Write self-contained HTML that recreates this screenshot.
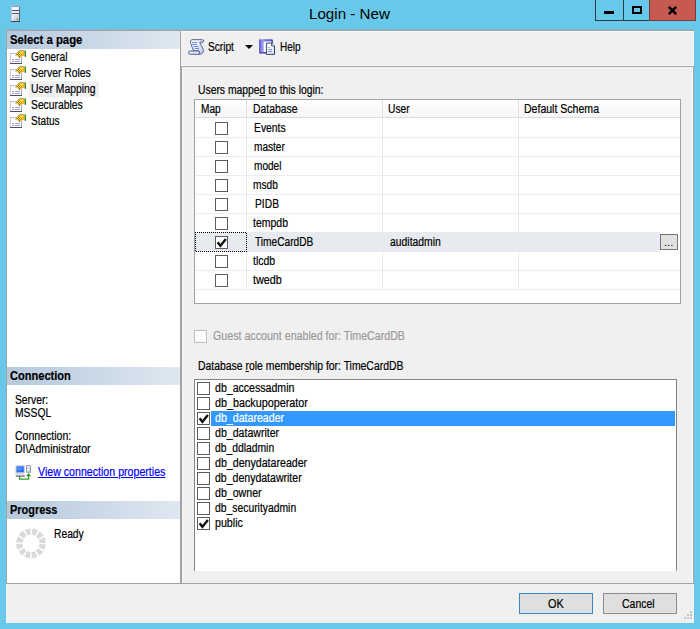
<!DOCTYPE html>
<html><head><meta charset="utf-8"><title>Login - New</title>
<style>
*{box-sizing:border-box;margin:0;padding:0}
html,body{width:700px;height:629px;overflow:hidden}
body{background:#68c8ea;font-family:"Liberation Sans",sans-serif;font-size:11px;color:#000;position:relative}
.a{position:absolute}
.t{position:absolute;white-space:nowrap;transform-origin:0 0;-webkit-text-stroke:0.2px}
.hdr{position:absolute;left:7px;width:173px;height:18px;background:linear-gradient(90deg,#b7c9dd 0%,#c6d5e5 40%,#dfe8f1 100%)}
.cb{position:absolute;width:13px;height:13px;border:1px solid #5c5c5c;background:#fff}
.ck{position:absolute}
.hl{position:absolute;left:195px;width:485px;height:1px;background:#ededed}
.vl{position:absolute;top:100px;width:1px;height:190px;background:#e9e9e9}
.btn{position:absolute;top:593px;height:21px;width:74px;border:1px solid #8c8c8c;background:#dfdfdf}
</style></head><body>

<svg class="a" style="left:11px;top:6px" width="9" height="16" viewBox="0 0 9 16"><defs><linearGradient id="sv" x1="0" y1="0" x2="1" y2="1"><stop offset="0" stop-color="#f4f4ff"/><stop offset="1" stop-color="#b9bce8"/></linearGradient></defs><rect x="0" y="0" width="9" height="16" fill="#f3f4fc"/><rect x="0" y="0" width="9" height="1" fill="#9a9eb4"/><rect x="0" y="0" width="1" height="16" fill="#c9cbdc"/><rect x="8" y="1" width="1" height="15" fill="#5c6078"/><rect x="0" y="15" width="9" height="1" fill="#3e3e50"/><rect x="1" y="4" width="7" height="1" fill="#4e586c"/><rect x="1" y="7" width="7" height="1" fill="#4e586c"/><rect x="1" y="5" width="7" height="1" fill="#dfe2f4"/><rect x="2" y="8" width="6" height="7" fill="url(#sv)"/><circle cx="6.3" cy="13.2" r="0.9" fill="#7ac010"/></svg>
<div class="a" style="left:595px;top:0;width:29px;height:21px;border:1px solid #2a3f4a;border-top:none"></div>
<div class="a" style="left:623px;top:0;width:27px;height:21px;border:1px solid #2a3f4a;border-top:none"></div>
<div class="a" style="left:649px;top:0;width:47px;height:21px;background:#c75a50;border:1px solid #7d3a35;border-top:none"></div>
<div class="a" style="left:604px;top:11px;width:10px;height:3px;background:#000"></div>
<div class="a" style="left:632px;top:6px;width:10px;height:8px;border:2px solid #000"></div>
<svg class="a" style="left:667px;top:6px" width="11" height="9" viewBox="0 0 11 9"><path d="M1.8 0.8 L9.2 8.2 M9.2 0.8 L1.8 8.2" stroke="#000" stroke-width="2.4"/></svg>
<div class="a" style="left:6px;top:30px;width:688px;height:593px;background:#f0f0f0"></div>
<div class="a" style="left:6px;top:29px;width:688px;height:1px;background:#80b9cf"></div>
<div class="a" style="left:6px;top:30px;width:688px;height:1px;background:#a3a3a3"></div>
<div class="a" style="left:181px;top:31px;width:513px;height:1px;background:#fbfbfb"></div>
<div class="a" style="left:6px;top:31px;width:175px;height:553px;background:#fff;border-left:1px solid #a3a3a3;border-right:1px solid #a3a3a3"></div>
<div class="hdr" style="top:31px"></div><div class="hdr" style="top:367px"></div><div class="hdr" style="top:501px"></div>
<div class="a" style="left:29px;top:81px;width:70px;height:16px;background:#f0f0f0"></div>
<svg class="a" style="left:10px;top:50px" width="16" height="16" viewBox="0 0 16 16"><rect x="0" y="3" width="12" height="11" fill="#fff"/><rect x="0" y="3" width="8" height="1" fill="#b9bbee"/><rect x="0" y="4" width="1" height="9" fill="#cfd0de"/><rect x="11" y="7" width="1" height="6" fill="#a2a4b2"/><rect x="0" y="13" width="12" height="1" fill="#505058"/><rect x="2" y="9" width="2" height="1" fill="#8f92dc"/><rect x="5" y="9" width="5" height="1" fill="#9a9de0"/><rect x="2" y="11" width="2" height="1" fill="#8f92dc"/><rect x="5" y="11" width="5" height="1" fill="#9a9de0"/><path d="M4.8 5.8 L7.2 2.6 L9.5 1 L12.5 0.3 L14.8 1 L14.8 5.2 L12.5 6.2 L10.6 6.4 L9.4 8 L8.2 7.2 L7 5.6 Z" fill="#e8a624"/><ellipse cx="12" cy="3.2" rx="2.9" ry="2.4" fill="#f7b32a"/><ellipse cx="11.6" cy="2.4" rx="1.9" ry="1.1" fill="#ffd84e"/><path d="M6.4 3.8 L8.3 2.2 L10 4 L10.4 6.2 L9.3 7.9 L8.2 7.1 Z" fill="#8a7430"/><g fill="#f4e04a"><rect x="7" y="3" width="1" height="1"/><rect x="9" y="3" width="1" height="1"/><rect x="8" y="4" width="1" height="1"/><rect x="7" y="5" width="1" height="1"/><rect x="9" y="5" width="1" height="1"/><rect x="8" y="6" width="1" height="1"/></g><path d="M8 1.8 L10 0.7 L12.6 0.2 L14.6 0.6" fill="none" stroke="#8a7a3a" stroke-width="0.7"/><rect x="14.8" y="0.4" width="1.2" height="6.2" fill="#2c9c34"/><rect x="14.8" y="5" width="1.2" height="1.6" fill="#1f6f28"/></svg>
<svg class="a" style="left:10px;top:66px" width="16" height="16" viewBox="0 0 16 16"><rect x="0" y="3" width="12" height="11" fill="#fff"/><rect x="0" y="3" width="8" height="1" fill="#b9bbee"/><rect x="0" y="4" width="1" height="9" fill="#cfd0de"/><rect x="11" y="7" width="1" height="6" fill="#a2a4b2"/><rect x="0" y="13" width="12" height="1" fill="#505058"/><rect x="2" y="9" width="2" height="1" fill="#8f92dc"/><rect x="5" y="9" width="5" height="1" fill="#9a9de0"/><rect x="2" y="11" width="2" height="1" fill="#8f92dc"/><rect x="5" y="11" width="5" height="1" fill="#9a9de0"/><path d="M4.8 5.8 L7.2 2.6 L9.5 1 L12.5 0.3 L14.8 1 L14.8 5.2 L12.5 6.2 L10.6 6.4 L9.4 8 L8.2 7.2 L7 5.6 Z" fill="#e8a624"/><ellipse cx="12" cy="3.2" rx="2.9" ry="2.4" fill="#f7b32a"/><ellipse cx="11.6" cy="2.4" rx="1.9" ry="1.1" fill="#ffd84e"/><path d="M6.4 3.8 L8.3 2.2 L10 4 L10.4 6.2 L9.3 7.9 L8.2 7.1 Z" fill="#8a7430"/><g fill="#f4e04a"><rect x="7" y="3" width="1" height="1"/><rect x="9" y="3" width="1" height="1"/><rect x="8" y="4" width="1" height="1"/><rect x="7" y="5" width="1" height="1"/><rect x="9" y="5" width="1" height="1"/><rect x="8" y="6" width="1" height="1"/></g><path d="M8 1.8 L10 0.7 L12.6 0.2 L14.6 0.6" fill="none" stroke="#8a7a3a" stroke-width="0.7"/><rect x="14.8" y="0.4" width="1.2" height="6.2" fill="#2c9c34"/><rect x="14.8" y="5" width="1.2" height="1.6" fill="#1f6f28"/></svg>
<svg class="a" style="left:10px;top:82px" width="16" height="16" viewBox="0 0 16 16"><rect x="0" y="3" width="12" height="11" fill="#fff"/><rect x="0" y="3" width="8" height="1" fill="#b9bbee"/><rect x="0" y="4" width="1" height="9" fill="#cfd0de"/><rect x="11" y="7" width="1" height="6" fill="#a2a4b2"/><rect x="0" y="13" width="12" height="1" fill="#505058"/><rect x="2" y="9" width="2" height="1" fill="#8f92dc"/><rect x="5" y="9" width="5" height="1" fill="#9a9de0"/><rect x="2" y="11" width="2" height="1" fill="#8f92dc"/><rect x="5" y="11" width="5" height="1" fill="#9a9de0"/><path d="M4.8 5.8 L7.2 2.6 L9.5 1 L12.5 0.3 L14.8 1 L14.8 5.2 L12.5 6.2 L10.6 6.4 L9.4 8 L8.2 7.2 L7 5.6 Z" fill="#e8a624"/><ellipse cx="12" cy="3.2" rx="2.9" ry="2.4" fill="#f7b32a"/><ellipse cx="11.6" cy="2.4" rx="1.9" ry="1.1" fill="#ffd84e"/><path d="M6.4 3.8 L8.3 2.2 L10 4 L10.4 6.2 L9.3 7.9 L8.2 7.1 Z" fill="#8a7430"/><g fill="#f4e04a"><rect x="7" y="3" width="1" height="1"/><rect x="9" y="3" width="1" height="1"/><rect x="8" y="4" width="1" height="1"/><rect x="7" y="5" width="1" height="1"/><rect x="9" y="5" width="1" height="1"/><rect x="8" y="6" width="1" height="1"/></g><path d="M8 1.8 L10 0.7 L12.6 0.2 L14.6 0.6" fill="none" stroke="#8a7a3a" stroke-width="0.7"/><rect x="14.8" y="0.4" width="1.2" height="6.2" fill="#2c9c34"/><rect x="14.8" y="5" width="1.2" height="1.6" fill="#1f6f28"/></svg>
<svg class="a" style="left:10px;top:98px" width="16" height="16" viewBox="0 0 16 16"><rect x="0" y="3" width="12" height="11" fill="#fff"/><rect x="0" y="3" width="8" height="1" fill="#b9bbee"/><rect x="0" y="4" width="1" height="9" fill="#cfd0de"/><rect x="11" y="7" width="1" height="6" fill="#a2a4b2"/><rect x="0" y="13" width="12" height="1" fill="#505058"/><rect x="2" y="9" width="2" height="1" fill="#8f92dc"/><rect x="5" y="9" width="5" height="1" fill="#9a9de0"/><rect x="2" y="11" width="2" height="1" fill="#8f92dc"/><rect x="5" y="11" width="5" height="1" fill="#9a9de0"/><path d="M4.8 5.8 L7.2 2.6 L9.5 1 L12.5 0.3 L14.8 1 L14.8 5.2 L12.5 6.2 L10.6 6.4 L9.4 8 L8.2 7.2 L7 5.6 Z" fill="#e8a624"/><ellipse cx="12" cy="3.2" rx="2.9" ry="2.4" fill="#f7b32a"/><ellipse cx="11.6" cy="2.4" rx="1.9" ry="1.1" fill="#ffd84e"/><path d="M6.4 3.8 L8.3 2.2 L10 4 L10.4 6.2 L9.3 7.9 L8.2 7.1 Z" fill="#8a7430"/><g fill="#f4e04a"><rect x="7" y="3" width="1" height="1"/><rect x="9" y="3" width="1" height="1"/><rect x="8" y="4" width="1" height="1"/><rect x="7" y="5" width="1" height="1"/><rect x="9" y="5" width="1" height="1"/><rect x="8" y="6" width="1" height="1"/></g><path d="M8 1.8 L10 0.7 L12.6 0.2 L14.6 0.6" fill="none" stroke="#8a7a3a" stroke-width="0.7"/><rect x="14.8" y="0.4" width="1.2" height="6.2" fill="#2c9c34"/><rect x="14.8" y="5" width="1.2" height="1.6" fill="#1f6f28"/></svg>
<svg class="a" style="left:10px;top:114px" width="16" height="16" viewBox="0 0 16 16"><rect x="0" y="3" width="12" height="11" fill="#fff"/><rect x="0" y="3" width="8" height="1" fill="#b9bbee"/><rect x="0" y="4" width="1" height="9" fill="#cfd0de"/><rect x="11" y="7" width="1" height="6" fill="#a2a4b2"/><rect x="0" y="13" width="12" height="1" fill="#505058"/><rect x="2" y="9" width="2" height="1" fill="#8f92dc"/><rect x="5" y="9" width="5" height="1" fill="#9a9de0"/><rect x="2" y="11" width="2" height="1" fill="#8f92dc"/><rect x="5" y="11" width="5" height="1" fill="#9a9de0"/><path d="M4.8 5.8 L7.2 2.6 L9.5 1 L12.5 0.3 L14.8 1 L14.8 5.2 L12.5 6.2 L10.6 6.4 L9.4 8 L8.2 7.2 L7 5.6 Z" fill="#e8a624"/><ellipse cx="12" cy="3.2" rx="2.9" ry="2.4" fill="#f7b32a"/><ellipse cx="11.6" cy="2.4" rx="1.9" ry="1.1" fill="#ffd84e"/><path d="M6.4 3.8 L8.3 2.2 L10 4 L10.4 6.2 L9.3 7.9 L8.2 7.1 Z" fill="#8a7430"/><g fill="#f4e04a"><rect x="7" y="3" width="1" height="1"/><rect x="9" y="3" width="1" height="1"/><rect x="8" y="4" width="1" height="1"/><rect x="7" y="5" width="1" height="1"/><rect x="9" y="5" width="1" height="1"/><rect x="8" y="6" width="1" height="1"/></g><path d="M8 1.8 L10 0.7 L12.6 0.2 L14.6 0.6" fill="none" stroke="#8a7a3a" stroke-width="0.7"/><rect x="14.8" y="0.4" width="1.2" height="6.2" fill="#2c9c34"/><rect x="14.8" y="5" width="1.2" height="1.6" fill="#1f6f28"/></svg>
<svg class="a" style="left:15px;top:464px" width="17" height="17" viewBox="0 0 17 17"><defs><radialGradient id="scr" cx="0.4" cy="0.4" r="0.7"><stop offset="0" stop-color="#5aa0ff"/><stop offset="1" stop-color="#1f5ce8"/></radialGradient></defs><rect x="0.5" y="1.2" width="9.3" height="8.6" rx="0.8" fill="#c6cad8"/><rect x="1.6" y="2.4" width="7.1" height="5.8" fill="url(#scr)"/><rect x="0.5" y="9.8" width="9.3" height="2" fill="#e4e6f0"/><rect x="0.8" y="11.6" width="9" height="1" fill="#3a3c58"/><rect x="11" y="1" width="5" height="7.8" rx="0.6" fill="#9a9cae"/><rect x="12" y="2" width="3" height="5.8" fill="#eef0fb"/><rect x="12" y="3.8" width="3" height="0.8" fill="#b8bcd0"/><rect x="13.6" y="6.6" width="1" height="1" fill="#3ab030"/><path d="M4.6 12.6 V15.2 H13.6 V11.5" fill="none" stroke="#2f9e22" stroke-width="1.3"/><path d="M10.8 12.2 L13.6 8.9 L16.4 12.2 Z" fill="#2f9e22"/></svg>
<svg class="a" style="left:15px;top:527px" width="32" height="33" viewBox="0 0 32 33"><circle cx="16" cy="16.4" r="11.75" fill="none" stroke="#dadada" stroke-width="6.3" stroke-dasharray="4.65 1.5022" stroke-dashoffset="-0.75"/></svg>
<div class="a" style="left:181px;top:66px;width:513px;height:518px;border:1px solid #a3a3a3;border-bottom:none"></div>
<div class="a" style="left:181px;top:65px;width:513px;height:1px;background:#fcfcfc"></div>
<div class="a" style="left:692px;top:67px;width:1px;height:516px;background:#f9f9f9"></div>
<div class="a" style="left:182px;top:67px;width:1px;height:516px;background:#f6f6f6"></div>
<div class="a" style="left:6px;top:583px;width:688px;height:1px;background:#a3a3a3"></div>
<svg class="a" style="left:188px;top:39px" width="17" height="16" viewBox="0 0 17 16"><defs><linearGradient id="sc" x1="0" y1="0" x2="1" y2="1"><stop offset="0.2" stop-color="#fbfcff"/><stop offset="1" stop-color="#bcc8f0"/></linearGradient></defs><path d="M3.6 0.7 H14.2 Q16 0.8 15.8 2.2 Q15.5 3.5 13.6 3.5 L11.7 3.4 L15.3 10.6 Q16 13.4 13.6 15 L10.8 15.3 L11.2 12 H5.7 L2.7 4.6 Q2 1.4 3.6 0.7 Z" fill="url(#sc)" stroke="#44507a" stroke-width="0.9"/><path d="M11.9 3.2 Q12 1.4 13.6 1.2 Q15.4 1.2 15.2 2.3 Q15 3.2 13.6 3.2 Z" fill="#aebbea"/><rect x="0.5" y="12" width="11" height="3.3" rx="1.65" fill="#e9edfc" stroke="#44507a" stroke-width="0.9"/><rect x="1.6" y="13.6" width="8" height="1" fill="#c3cdf2"/><path d="M4 3.5 H9 M4 5.5 H9 M5.4 7.5 H10.4 M6.8 9.5 H11" stroke="#6a86e4" stroke-width="1" fill="none"/></svg>
<div class="a" style="left:245px;top:45px;width:0;height:0;border-left:4px solid transparent;border-right:4px solid transparent;border-top:4px solid #000"></div>
<svg class="a" style="left:259px;top:39px" width="17" height="16" viewBox="0 0 17 16"><defs><linearGradient id="bk" x1="0" y1="0" x2="1" y2="0"><stop offset="0" stop-color="#5a5ac4"/><stop offset="0.25" stop-color="#9a9af0"/><stop offset="0.5" stop-color="#6e6ed6"/><stop offset="1" stop-color="#5c5cc8"/></linearGradient><linearGradient id="dc" x1="0" y1="0" x2="1" y2="1"><stop offset="0.3" stop-color="#fff"/><stop offset="1" stop-color="#cfd9ee"/></linearGradient></defs><rect x="0" y="0.2" width="13.8" height="14.2" rx="0.8" fill="url(#bk)"/><rect x="4.6" y="2.4" width="8" height="10.6" fill="#fff"/><rect x="12.6" y="1" width="1.2" height="12" fill="#4a4ab0"/><rect x="0.6" y="13.2" width="7" height="1.2" fill="#4848a8"/><path d="M7.4 4.1 H12.6 L15.5 7 V15.4 H7.4 Z" fill="url(#dc)" stroke="#22335c" stroke-width="0.9"/><path d="M12.6 4.1 V7 H15.5" fill="#e9eefa" stroke="#22335c" stroke-width="0.8"/><path d="M8.9 8.6 H10.8 M8.9 10.6 H13 M8.9 12.6 H13" stroke="#7f93c6" stroke-width="1" fill="none"/></svg>
<div class="a" style="left:194px;top:99px;width:487px;height:205px;border:1px solid #a0a3a9;background:#fff"></div>
<div class="a" style="left:195px;top:100px;width:485px;height:17px;background:linear-gradient(#fff,#f6f6f6)"></div>
<div class="hl" style="top:117px;background:#dcdcdc"></div>
<div class="a" style="left:195px;top:232px;width:465px;height:20px;background:#e7ebf0"></div>
<div class="hl" style="top:137px"></div>
<div class="hl" style="top:156px"></div>
<div class="hl" style="top:175px"></div>
<div class="hl" style="top:194px"></div>
<div class="hl" style="top:213px"></div>
<div class="hl" style="top:270px"></div>
<div class="hl" style="top:289px"></div>
<div class="vl" style="left:246px"></div>
<div class="a" style="left:246px;top:101px;width:1px;height:16px;background:#dedede"></div>
<div class="vl" style="left:382px"></div>
<div class="a" style="left:382px;top:101px;width:1px;height:16px;background:#dedede"></div>
<div class="vl" style="left:518px"></div>
<div class="a" style="left:518px;top:101px;width:1px;height:16px;background:#dedede"></div>
<div class="cb" style="left:215px;top:122px"></div>
<div class="cb" style="left:215px;top:141px"></div>
<div class="cb" style="left:215px;top:160px"></div>
<div class="cb" style="left:215px;top:179px"></div>
<div class="cb" style="left:215px;top:198px"></div>
<div class="cb" style="left:215px;top:217px"></div>
<div class="cb" style="left:215px;top:236px"></div>
<div class="cb" style="left:215px;top:255px"></div>
<div class="cb" style="left:215px;top:274px"></div>
<svg class="ck" style="left:215px;top:236px" width="13" height="13" viewBox="0 0 13 13"><path d="M2.6 6.2 L5.4 9.8 L10.9 3.1" fill="none" stroke="#111" stroke-width="2.4"/></svg>
<div class="a" style="left:195px;top:232px;width:52px;height:1px;background:repeating-linear-gradient(90deg,#000 0 1px,transparent 1px 2px)"></div><div class="a" style="left:195px;top:251px;width:52px;height:1px;background:repeating-linear-gradient(90deg,transparent 0 1px,#000 1px 2px)"></div><div class="a" style="left:195px;top:232px;width:1px;height:20px;background:repeating-linear-gradient(180deg,#000 0 1px,transparent 1px 2px)"></div><div class="a" style="left:246px;top:232px;width:1px;height:20px;background:repeating-linear-gradient(180deg,transparent 0 1px,#000 1px 2px)"></div>
<div class="a" style="left:660px;top:234px;width:18px;height:16px;background:#e1e1e1;border:1px solid #747474"></div>
<div class="cb" style="left:194px;top:330px;border-color:#c0c0c0;background:#fcfcfc"></div>
<div class="a" style="left:194px;top:379px;width:483px;height:192px;border:1px solid #82848c;border-bottom:none;background:#fff"></div>
<div class="a" style="left:211px;top:411px;width:464px;height:15px;background:#3399ff"></div>
<div class="cb" style="left:197px;top:382px"></div>
<div class="cb" style="left:197px;top:397px"></div>
<div class="cb" style="left:197px;top:412px"></div>
<div class="cb" style="left:197px;top:427px"></div>
<div class="cb" style="left:197px;top:442px"></div>
<div class="cb" style="left:197px;top:457px"></div>
<div class="cb" style="left:197px;top:472px"></div>
<div class="cb" style="left:197px;top:487px"></div>
<div class="cb" style="left:197px;top:502px"></div>
<div class="cb" style="left:197px;top:517px"></div>
<svg class="ck" style="left:197px;top:412px" width="13" height="13" viewBox="0 0 13 13"><path d="M2.6 6.2 L5.4 9.8 L10.9 3.1" fill="none" stroke="#111" stroke-width="2.4"/></svg>
<svg class="ck" style="left:197px;top:517px" width="13" height="13" viewBox="0 0 13 13"><path d="M2.6 6.2 L5.4 9.8 L10.9 3.1" fill="none" stroke="#111" stroke-width="2.4"/></svg>
<div class="btn" style="left:519px;border-color:#3c86cc"></div><div class="btn" style="left:603px"></div>
<div class="a" style="left:690px;top:611px;width:2px;height:2px;background:#c4c4c4"></div>
<div class="a" style="left:690px;top:614px;width:2px;height:2px;background:#c4c4c4"></div>
<div class="a" style="left:690px;top:617px;width:2px;height:2px;background:#c4c4c4"></div>
<div class="a" style="left:687px;top:614px;width:2px;height:2px;background:#c4c4c4"></div>
<div class="a" style="left:687px;top:617px;width:2px;height:2px;background:#c4c4c4"></div>
<div class="a" style="left:684px;top:617px;width:2px;height:2px;background:#c4c4c4"></div>
<div class="t" style="left:308.7px;top:5.3px;font-size:15px;line-height:18px;transform:scaleX(1.0107);-webkit-text-stroke:0">Login - New</div>
<div class="t" style="left:9.6px;top:33.3px;font-size:12px;line-height:14px;transform:scaleX(0.9437);font-weight:bold;">Select a page</div>
<div class="t" style="left:30.6px;top:49.5px;font-size:12.3px;line-height:15px;transform:scaleX(0.8320);">General</div>
<div class="t" style="left:31.4px;top:65.5px;font-size:12.3px;line-height:15px;transform:scaleX(0.8385);">Server Roles</div>
<div class="t" style="left:31.4px;top:81.5px;font-size:12.3px;line-height:15px;transform:scaleX(0.8438);">User Mapping</div>
<div class="t" style="left:31.4px;top:97.5px;font-size:12.3px;line-height:15px;transform:scaleX(0.8386);">Securables</div>
<div class="t" style="left:31.4px;top:113.5px;font-size:12.3px;line-height:15px;transform:scaleX(0.8201);">Status</div>
<div class="t" style="left:9.6px;top:369.0px;font-size:12px;line-height:14px;transform:scaleX(0.9212);font-weight:bold;">Connection</div>
<div class="t" style="left:15.4px;top:393.0px;font-size:12.3px;line-height:15px;transform:scaleX(0.8375);">Server:</div>
<div class="t" style="left:15.4px;top:406.0px;font-size:12.3px;line-height:15px;transform:scaleX(0.8406);">MSSQL</div>
<div class="t" style="left:15.2px;top:429.0px;font-size:12.3px;line-height:15px;transform:scaleX(0.8562);">Connection:</div>
<div class="t" style="left:15.4px;top:442.0px;font-size:12.3px;line-height:15px;transform:scaleX(0.8576);">DI\Administrator</div>
<div class="t" style="left:38.2px;top:464.5px;font-size:12.3px;line-height:15px;transform:scaleX(0.8641);color:#0000ff;text-decoration:underline">View connection properties</div>
<div class="t" style="left:9.6px;top:503.1px;font-size:12px;line-height:14px;transform:scaleX(0.9110);font-weight:bold;">Progress</div>
<div class="t" style="left:54.3px;top:527.0px;font-size:12.3px;line-height:15px;transform:scaleX(0.8355);">Ready</div>
<div class="t" style="left:208.4px;top:40.0px;font-size:12.3px;line-height:15px;transform:scaleX(0.8239);">Script</div>
<div class="t" style="left:279.7px;top:40.0px;font-size:12.3px;line-height:15px;transform:scaleX(0.8143);">Help</div>
<div class="t" style="left:197.6px;top:83.0px;font-size:12.3px;line-height:15px;transform:scaleX(0.8414);">Users mappe<u>d</u> to this login:</div>
<div class="t" style="left:201.4px;top:102.0px;font-size:12.3px;line-height:15px;transform:scaleX(0.8193);">Map</div>
<div class="t" style="left:252.6px;top:102.0px;font-size:12.3px;line-height:15px;transform:scaleX(0.8435);">Database</div>
<div class="t" style="left:388.4px;top:102.0px;font-size:12.3px;line-height:15px;transform:scaleX(0.8318);">User</div>
<div class="t" style="left:524.0px;top:102.0px;font-size:12.3px;line-height:15px;transform:scaleX(0.8571);">Default Schema</div>
<div class="t" style="left:254.4px;top:121.0px;font-size:12.3px;line-height:15px;transform:scaleX(0.8406);">Events</div>
<div class="t" style="left:253.6px;top:140.0px;font-size:12.3px;line-height:15px;transform:scaleX(0.8193);">master</div>
<div class="t" style="left:253.6px;top:159.0px;font-size:12.3px;line-height:15px;transform:scaleX(0.8179);">model</div>
<div class="t" style="left:253.4px;top:178.0px;font-size:12.3px;line-height:15px;transform:scaleX(0.8278);">msdb</div>
<div class="t" style="left:254.5px;top:197.0px;font-size:12.3px;line-height:15px;transform:scaleX(0.8361);">PIDB</div>
<div class="t" style="left:253.2px;top:216.0px;font-size:12.3px;line-height:15px;transform:scaleX(0.8530);">tempdb</div>
<div class="t" style="left:255.0px;top:235.0px;font-size:12.3px;line-height:15px;transform:scaleX(0.8271);">TimeCardDB</div>
<div class="t" style="left:253.2px;top:254.0px;font-size:12.3px;line-height:15px;transform:scaleX(0.8544);">tlcdb</div>
<div class="t" style="left:253.2px;top:273.0px;font-size:12.3px;line-height:15px;transform:scaleX(0.8773);">twedb</div>
<div class="t" style="left:389.6px;top:235.0px;font-size:12.3px;line-height:15px;transform:scaleX(0.8442);">auditadmin</div>
<div class="t" style="left:213.0px;top:329.0px;font-size:12.3px;line-height:15px;transform:scaleX(0.8669);color:#9a9a9a;">Guest account enabled for: TimeCardDB</div>
<div class="t" style="left:197.6px;top:359.0px;font-size:12.3px;line-height:15px;transform:scaleX(0.8465);">Database <u>r</u>ole membership for: TimeCardDB</div>
<div class="t" style="left:214.6px;top:381.0px;font-size:12.3px;line-height:15px;transform:scaleX(0.8604);">db_accessadmin</div>
<div class="t" style="left:214.6px;top:396.0px;font-size:12.3px;line-height:15px;transform:scaleX(0.8765);">db_backupoperator</div>
<div class="t" style="left:214.6px;top:411.0px;font-size:12.3px;line-height:15px;transform:scaleX(0.8644);color:#fff;">db_datareader</div>
<div class="t" style="left:214.6px;top:426.0px;font-size:12.3px;line-height:15px;transform:scaleX(0.8609);">db_datawriter</div>
<div class="t" style="left:214.6px;top:441.0px;font-size:12.3px;line-height:15px;transform:scaleX(0.8399);">db_ddladmin</div>
<div class="t" style="left:214.6px;top:456.0px;font-size:12.3px;line-height:15px;transform:scaleX(0.8639);">db_denydatareader</div>
<div class="t" style="left:214.6px;top:471.0px;font-size:12.3px;line-height:15px;transform:scaleX(0.8563);">db_denydatawriter</div>
<div class="t" style="left:214.6px;top:486.0px;font-size:12.3px;line-height:15px;transform:scaleX(0.8636);">db_owner</div>
<div class="t" style="left:214.6px;top:501.0px;font-size:12.3px;line-height:15px;transform:scaleX(0.8419);">db_securityadmin</div>
<div class="t" style="left:214.6px;top:516.0px;font-size:12.3px;line-height:15px;transform:scaleX(0.8681);">public</div>
<div class="t" style="left:664.2px;top:235.9px;font-size:11px;line-height:13px;transform:scaleX(1.0031);-webkit-text-stroke:0">...</div>
<div class="t" style="left:547.6px;top:597.0px;font-size:12.3px;line-height:15px;transform:scaleX(0.8886);">OK</div>
<div class="t" style="left:622.4px;top:597.0px;font-size:12.3px;line-height:15px;transform:scaleX(0.8516);">Cancel</div>
</body></html>
